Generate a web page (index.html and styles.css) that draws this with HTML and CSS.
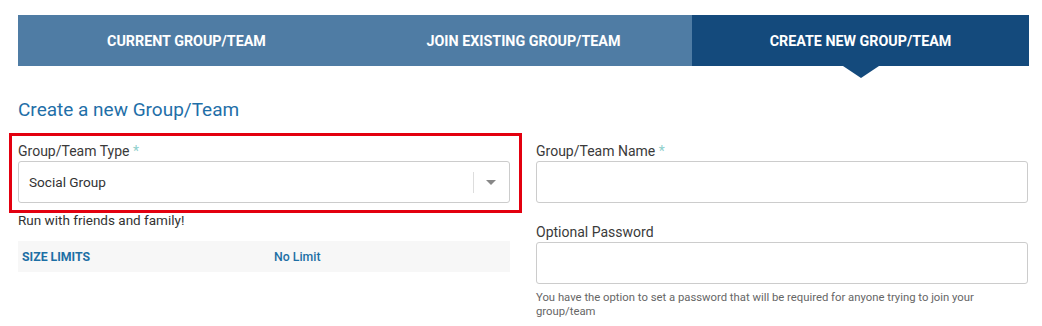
FILE: index.html
```html
<!DOCTYPE html>
<html>
<head>
    <title>Create Group/Team</title>
    <link rel="stylesheet" href="styles.css">
</head>
<body>

<div class="page">
    <ul class="tabs">
        <li class="tab">Current Group/Team</li>
        <li class="tab">Join Existing Group/Team</li>
        <li class="tab active">Create New Group/Team</li>
    </ul>

    <h2 class="title">Create a new Group/Team</h2>

    <div class="form-grid">
        <div class="col">
            <div class="field highlight">
                <label>Group/Team Type <span class="req">*</span></label>
                <div class="select">
                    <span class="select-value">Social Group</span>
                    <span class="select-sep"></span>
                    <span class="select-caret"></span>
                </div>
            </div>
            <p class="type-desc">Run with friends and family!</p>
            <div class="limits">
                <span class="limits-key">SIZE LIMITS</span>
                <span class="limits-val">No Limit</span>
            </div>
        </div>

        <div class="col">
            <div class="field">
                <label>Group/Team Name <span class="req">*</span></label>
                <input type="text" class="input">
            </div>
            <div class="field spaced">
                <label>Optional Password</label>
                <input type="password" class="input">
                <p class="help">You have the option to set a password that will be required for anyone trying to join your group/team</p>
            </div>
        </div>
    </div>
</div>

</body>
</html>
```

FILE: styles.css
```css
body {
    font-family: Roboto, "Liberation Sans", Arial, sans-serif;
    margin: 0;
    padding: 0;
    background: #fff;
    color: #333;
}
.page {
    width: 1011px;
    margin-left: 18px;
    padding-top: 15px;
}
.tabs {
    list-style: none;
    margin: 0;
    padding: 0;
    display: flex;
}
.tab {
    flex: 1;
    height: 51px;
    display: flex;
    align-items: center;
    justify-content: center;
    background: #4f7ca4;
    color: #fff;
    font-size: 14.3px;
    font-weight: bold;
    text-transform: uppercase;
    position: relative;
}
.tab.active {
    background: #144a7c;
}
.tab.active::after {
    content: "";
    position: absolute;
    left: 50%;
    bottom: -12px;
    margin-left: -18px;
    border-left: 18px solid transparent;
    border-right: 18px solid transparent;
    border-top: 12px solid #144a7c;
}
.title {
    margin: 32px 0 0;
    font-size: 19px;
    line-height: 23px;
    font-weight: normal;
    color: #1f6fa8;
}
.form-grid {
    display: grid;
    grid-template-columns: 492px 492px;
    gap: 26px;
    margin-top: 21px;
}
.field label {
    display: block;
    font-size: 14px;
    line-height: 18px;
    margin-bottom: 1px;
    color: #3a3a3a;
}
.req {
    color: #8fd0cc;
}
.highlight {
    position: relative;
}
/* red annotation box drawn over the type field */
.highlight::after {
    content: "";
    position: absolute;
    top: -9px;
    bottom: -10px;
    left: -9px;
    right: -12px;
    border: 3.5px solid #e3000f;
    pointer-events: none;
}
.select {
    height: 42px;
    box-sizing: border-box;
    border: 1px solid #ccc;
    border-radius: 3px;
    display: flex;
    align-items: center;
    padding-left: 10px;
}
.select-value {
    flex: 1;
    font-size: 13.6px;
    color: #333;
}
.select-sep {
    width: 1px;
    height: 21px;
    background: #ddd;
}
.select-caret {
    width: 0;
    height: 0;
    margin: 0 13px 0 12px;
    border-left: 5px solid transparent;
    border-right: 5px solid transparent;
    border-top: 5px solid #888;
}
.type-desc {
    margin: 9px 0 0;
    font-size: 13.5px;
    line-height: 17px;
    color: #333;
}
.limits {
    margin-top: 12px;
    height: 31px;
    background: #f7f7f7;
    display: grid;
    grid-template-columns: 252px 1fr;
    align-items: center;
    padding: 0 4px;
    font-size: 12.3px;
    color: #1d6fa5;
}
.limits-key {
    font-weight: bold;
}
.limits-val {
    font-weight: 500;
}
.input {
    display: block;
    width: 100%;
    height: 42px;
    box-sizing: border-box;
    border: 1px solid #ccc;
    border-radius: 3px;
    margin: 0;
}
.spaced {
    margin-top: 20px;
}
.help {
    margin: 7px 0 0;
    font-size: 11.3px;
    line-height: 14px;
    color: #666;
}
```
